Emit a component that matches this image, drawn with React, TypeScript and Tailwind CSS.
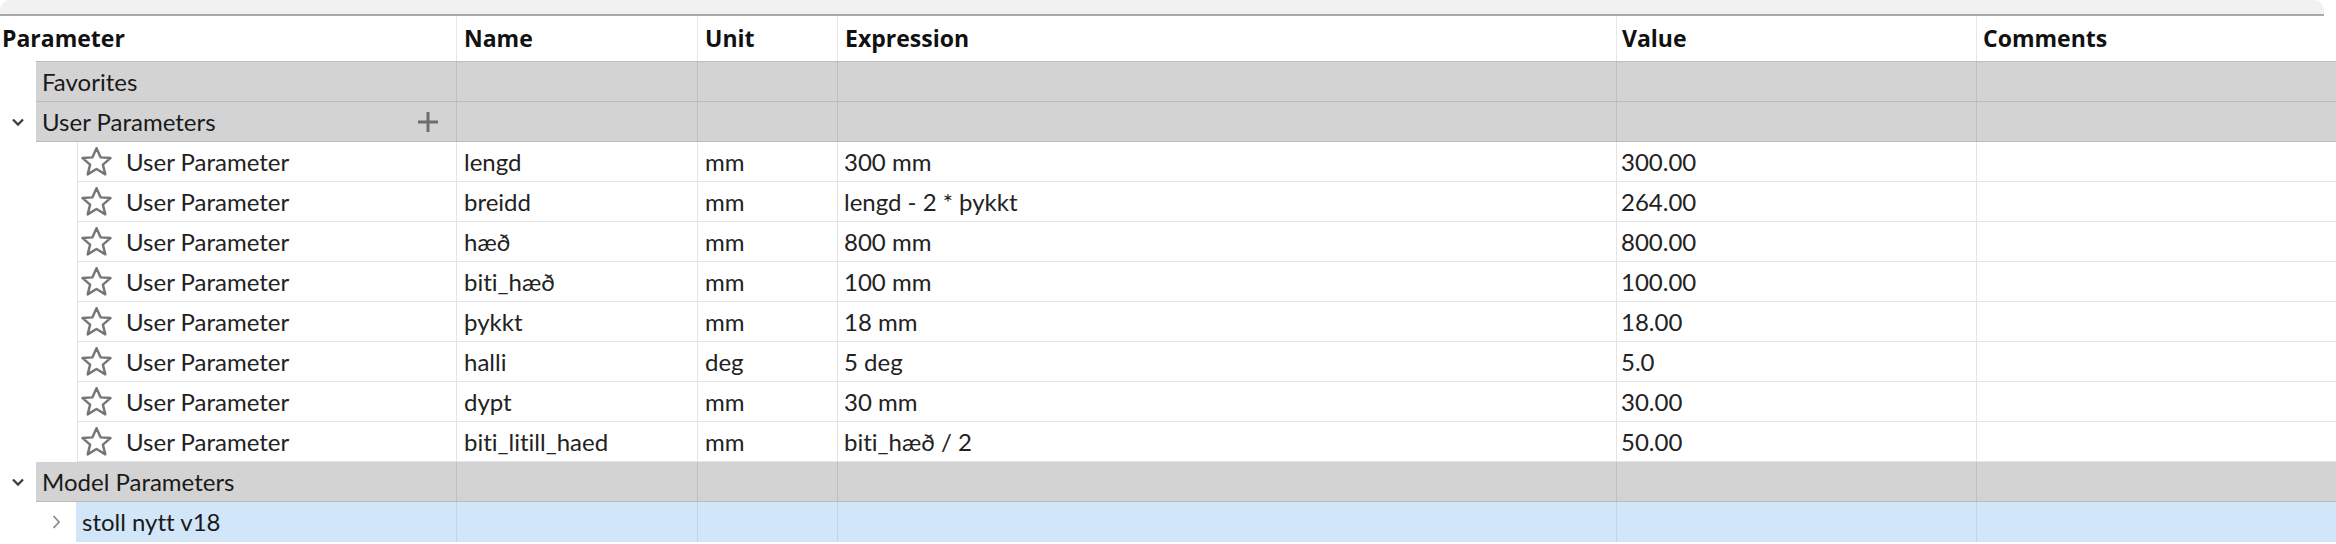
import React from "react";

const FONT = { fontFamily: "Lato, 'Noto Sans', sans-serif" };

const rows = [
  ["lengd", "mm", "300 mm", "300.00"],
  ["breidd", "mm", "lengd - 2 * þykkt", "264.00"],
  ["hæð", "mm", "800 mm", "800.00"],
  ["biti_hæð", "mm", "100 mm", "100.00"],
  ["þykkt", "mm", "18 mm", "18.00"],
  ["halli", "deg", "5 deg", "5.0"],
  ["dypt", "mm", "30 mm", "30.00"],
  ["biti_litill_haed", "mm", "biti_hæð / 2", "50.00"],
];

function ChevronDown() {
  return (
    <svg width="12" height="9" viewBox="0 0 12 9" fill="none">
      <path d="M1 1.5 L6 6.5 L11 1.5" stroke="#3e3e3e" strokeWidth="2.3" />
    </svg>
  );
}

function ChevronRight() {
  return (
    <svg width="9" height="14" viewBox="0 0 9 14" fill="none">
      <path d="M1.5 1 L7 7 L1.5 13" stroke="#8a8a8a" strokeWidth="1.8" />
    </svg>
  );
}

function Star() {
  return (
    <svg width="33" height="31" viewBox="0 0 31 29" fill="none">
      <path
        d="M15.5 2 L19.3 10.6 L28.6 11.3 L21.5 17.4 L23.8 26.6 L15.5 21.6 L7.2 26.6 L9.5 17.4 L2.4 11.3 L11.7 10.6 Z"
        stroke="#767676"
        strokeWidth="2.3"
        strokeLinejoin="round"
      />
    </svg>
  );
}

function Plus() {
  return (
    <svg width="22" height="22" viewBox="0 0 22 22">
      <path d="M11 1 V21 M1 11 H21" stroke="#6e6e6e" strokeWidth="3" />
    </svg>
  );
}

function GroupRow({ label, open, plus, top }: { label: string; open?: boolean; plus?: boolean; top?: boolean }) {
  return (
    <div className={`flex ${top ? "h-[41px]" : "h-[40px]"}`}>
      <div className="w-[36px] flex items-center pl-[12px]">{open && <ChevronDown />}</div>
      <div className={`flex flex-1 bg-[#d3d3d3] border-b border-[#bcbcbc] ${top ? "border-t" : ""}`}>
        <div className="w-[420px] flex items-center justify-between pl-[6px] pr-[17px] text-[#1a1a1a]">
          <span>{label}</span>
          {plus && <Plus />}
        </div>
        <div className="w-[241px] border-l border-[#bfbfbf]" />
        <div className="w-[140px] border-l border-[#bfbfbf]" />
        <div className="w-[779px] border-l border-[#bfbfbf]" />
        <div className="w-[360px] border-l border-[#bfbfbf]" />
        <div className="flex-1 border-l border-[#bfbfbf]" />
      </div>
    </div>
  );
}

function ParamRow({ r }: { r: string[] }) {
  return (
    <div className="flex h-[40px]">
      <div className="w-[77px]" />
      <div className="flex flex-1 border-l border-b border-[#e4e4e4] text-[#222222]">
        <div className="w-[378px] flex items-center pl-[2px] gap-[13px]">
          <Star />
          <span>User Parameter</span>
        </div>
        <div className="w-[241px] flex items-center border-l border-[#e4e4e4] pl-[7px]">{r[0]}</div>
        <div className="w-[140px] flex items-center border-l border-[#e4e4e4] pl-[7px]">{r[1]}</div>
        <div className="w-[779px] flex items-center border-l border-[#e4e4e4] pl-[6px]">{r[2]}</div>
        <div className="w-[360px] flex items-center border-l border-[#e4e4e4] pl-[4px]">{r[3]}</div>
        <div className="flex-1 border-l border-[#e4e4e4]" />
      </div>
    </div>
  );
}

export default function App() {
  return (
    <div
      className="w-[2336px] h-[544px] bg-white overflow-hidden text-[24px] leading-none [font-variant-ligatures:none]"
      style={FONT}
    >
      <div className="h-[16px] pr-[12px]">
        <div className="h-[16px] bg-[#f1f1f1] rounded-t-[10px] border-b-2 border-[#a9a9a9]" />
      </div>
      <div className="flex h-[45px] font-bold text-[#111111] text-[23px] font-['Open_Sans',sans-serif]">
        <div className="w-[456px] flex items-center pl-[2px]">Parameter</div>
        <div className="w-[241px] flex items-center border-l border-[#e6e6e6] pl-[7px]">Name</div>
        <div className="w-[140px] flex items-center border-l border-[#e6e6e6] pl-[7px]">Unit</div>
        <div className="w-[779px] flex items-center border-l border-[#e6e6e6] pl-[7px]">Expression</div>
        <div className="w-[360px] flex items-center border-l border-[#e6e6e6] pl-[5px]">Value</div>
        <div className="flex-1 flex items-center border-l border-[#e6e6e6] pl-[6px]">Comments</div>
      </div>
      <GroupRow label="Favorites" top />
      <GroupRow label="User Parameters" open plus />
      {rows.map((r, i) => (
        <ParamRow key={i} r={r} />
      ))}
      <GroupRow label="Model Parameters" open />
      <div className="flex h-[40px]">
        <div className="w-[76px] flex items-center justify-end pr-[15px]">
          <ChevronRight />
        </div>
        <div className="flex flex-1 bg-[#d2e6f9] text-[#1a1a1a]">
          <div className="w-[380px] flex items-center pl-[6px]">stoll nytt v18</div>
          <div className="w-[241px] border-l border-[#c2d3e3]" />
          <div className="w-[140px] border-l border-[#c2d3e3]" />
          <div className="w-[779px] border-l border-[#c2d3e3]" />
          <div className="w-[360px] border-l border-[#c2d3e3]" />
          <div className="flex-1 border-l border-[#c2d3e3]" />
        </div>
      </div>
    </div>
  );
}
